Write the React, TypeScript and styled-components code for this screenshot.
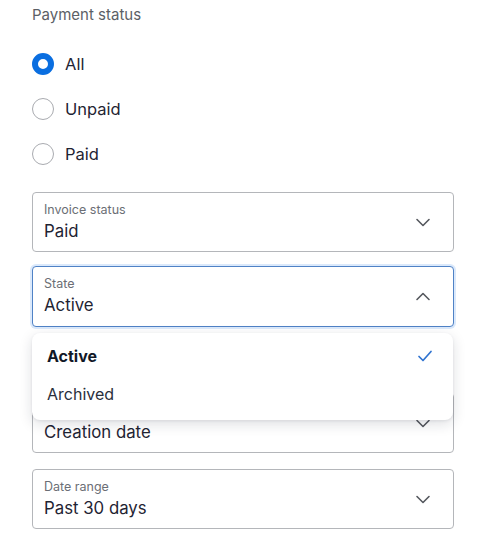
import React from "react";
import styled, { createGlobalStyle } from "styled-components";

const Global = createGlobalStyle`
  html, body { margin: 0; padding: 0; background: #fff; }
  body { font-family: Inter, "Noto Sans", sans-serif; color: #1a1f36; }
  * { box-sizing: border-box; }
`;

const Page = styled.div`
  width: 480px;
  height: 546px;
  padding: 5px 26px 0 32px;
  display: flex;
  flex-direction: column;
`;

const SectionTitle = styled.div`
  font-size: 15px;
  line-height: 20px;
  color: #5c5f66;
`;

const RadioList = styled.div`
  display: flex;
  flex-direction: column;
  gap: 23px;
  margin-top: 28px;
`;

const RadioRow = styled.label`
  display: flex;
  align-items: center;
  gap: 11px;
  font-size: 16.5px;
  line-height: 22px;
  color: #1f2433;
`;

const RadioDot = styled.span<{ $checked?: boolean }>`
  width: 22px;
  height: 22px;
  border-radius: 50%;
  border: ${(p) => (p.$checked ? "6px solid #0a6ee0" : "1.5px solid #a9abb0")};
  background: #fff;
  flex-shrink: 0;
`;

const Fields = styled.div`
  display: flex;
  flex-direction: column;
  margin-top: 27px;
  position: relative;
`;

const Field = styled.div<{ $focused?: boolean; $gap?: number }>`
  height: ${(p) => (p.$focused ? 61 : 60)}px;
  margin-top: ${(p) => p.$gap ?? 0}px;
  border: 1px solid ${(p) => (p.$focused ? "#4f82c6" : "#b4b6ba")};
  box-shadow: ${(p) => (p.$focused ? "0 0 0 2px #dbe9fb" : "none")};
  border-radius: 4px;
  padding: 10px 22px 0 11px;
  display: flex;
  align-items: center;
  justify-content: space-between;
  background: #fff;
`;

const FieldText = styled.div`
  display: flex;
  flex-direction: column;
  align-self: flex-start;
  gap: 2px;
`;

const FieldLabel = styled.span`
  font-size: 12.5px;
  line-height: 14px;
  color: #6b6e75;
`;

const FieldValue = styled.span`
  font-size: 16.8px;
  line-height: 25px;
  color: #1f2433;
`;

const Chevron = styled.svg`
  width: 16px;
  height: 16px;
  margin-top: -10px;
  color: #55585e;
`;

const Menu = styled.div`
  position: absolute;
  left: 0;
  right: 1px;
  top: 141px;
  background: #fff;
  border-radius: 8px;
  box-shadow: 0 4px 14px rgba(20, 30, 50, 0.14), 0 1px 3px rgba(20, 30, 50, 0.08);
  padding: 4px 0 7px;
  display: flex;
  flex-direction: column;
`;

const MenuItem = styled.div<{ $selected?: boolean }>`
  height: 38px;
  flex-shrink: 0;
  padding: 0 19px 0 15px;
  display: flex;
  align-items: center;
  justify-content: space-between;
  font-size: 16px;
  font-weight: ${(p) => (p.$selected ? 700 : 400)};
  color: ${(p) => (p.$selected ? "#111827" : "#2a2f3c")};
`;

const Check = styled.svg`
  width: 18px;
  height: 18px;
  color: #2f73d0;
`;

const Down = () => (
  <Chevron viewBox="0 0 16 16" fill="none">
    <path d="M2 5.5l6 6 6-6" stroke="currentColor" strokeWidth="1.6" strokeLinecap="round" strokeLinejoin="round" />
  </Chevron>
);

const Up = () => (
  <Chevron viewBox="0 0 16 16" fill="none">
    <path d="M2 10.5l6-6 6 6" stroke="currentColor" strokeWidth="1.6" strokeLinecap="round" strokeLinejoin="round" />
  </Chevron>
);

export default function App() {
  return (
    <>
      <Global />
      <Page>
        <SectionTitle>Payment status</SectionTitle>
        <RadioList>
          <RadioRow><RadioDot $checked />All</RadioRow>
          <RadioRow><RadioDot />Unpaid</RadioRow>
          <RadioRow><RadioDot />Paid</RadioRow>
        </RadioList>
        <Fields>
          <Field>
            <FieldText>
              <FieldLabel>Invoice status</FieldLabel>
              <FieldValue>Paid</FieldValue>
            </FieldText>
            <Down />
          </Field>
          <Field $focused $gap={14}>
            <FieldText>
              <FieldLabel>State</FieldLabel>
              <FieldValue>Active</FieldValue>
            </FieldText>
            <Up />
          </Field>
          <Field $gap={66}>
            <FieldText>
              <FieldLabel>{"\u00a0"}</FieldLabel>
              <FieldValue>Creation date</FieldValue>
            </FieldText>
            <Down />
          </Field>
          <Field $gap={16}>
            <FieldText>
              <FieldLabel>Date range</FieldLabel>
              <FieldValue>Past 30 days</FieldValue>
            </FieldText>
            <Down />
          </Field>
          <Menu>
            <MenuItem $selected>
              Active
              <Check viewBox="0 0 18 18" fill="none">
                <path d="M3 9.5l4 4 8-9" stroke="currentColor" strokeWidth="1.7" strokeLinecap="round" strokeLinejoin="round" />
              </Check>
            </MenuItem>
            <MenuItem>Archived</MenuItem>
          </Menu>
        </Fields>
      </Page>
    </>
  );
}
